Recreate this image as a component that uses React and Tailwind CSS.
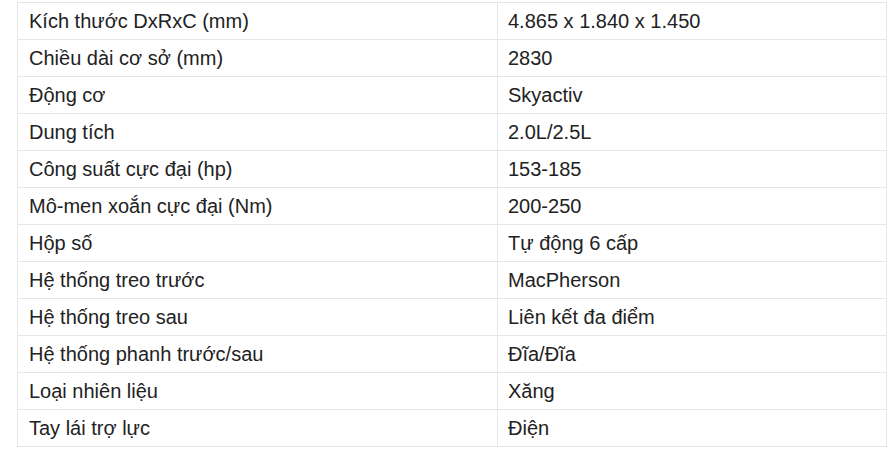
const rows = [
  ['Kích thước DxRxC (mm)', '4.865 x 1.840 x 1.450'],
  ['Chiều dài cơ sở (mm)', '2830'],
  ['Động cơ', 'Skyactiv'],
  ['Dung tích', '2.0L/2.5L'],
  ['Công suất cực đại (hp)', '153-185'],
  ['Mô-men xoắn cực đại (Nm)', '200-250'],
  ['Hộp số', 'Tự động 6 cấp'],
  ['Hệ thống treo trước', 'MacPherson'],
  ['Hệ thống treo sau', 'Liên kết đa điểm'],
  ['Hệ thống phanh trước/sau', 'Đĩa/Đĩa'],
  ['Loại nhiên liệu', 'Xăng'],
  ['Tay lái trợ lực', 'Điện'],
];

export default function App() {
  return (
    <div className="w-[893px] h-[459px] bg-white pt-[2px] pl-[17px]" style={{ fontFamily: '"Liberation Sans", Arial, sans-serif' }}>
      <table className="w-[870px] border-collapse table-fixed text-[20px] text-[#222]">
        <colgroup>
          <col className="w-[480px]" />
          <col />
        </colgroup>
        <tbody>
          {rows.map(([k, v]) => (
            <tr key={k}>
              <td className="border border-[#e6e6e6] px-[11px] py-0 leading-[36px]">{k}</td>
              <td className="border border-[#e6e6e6] px-[10px] py-0 leading-[36px]">{v}</td>
            </tr>
          ))}
        </tbody>
      </table>
    </div>
  );
}
